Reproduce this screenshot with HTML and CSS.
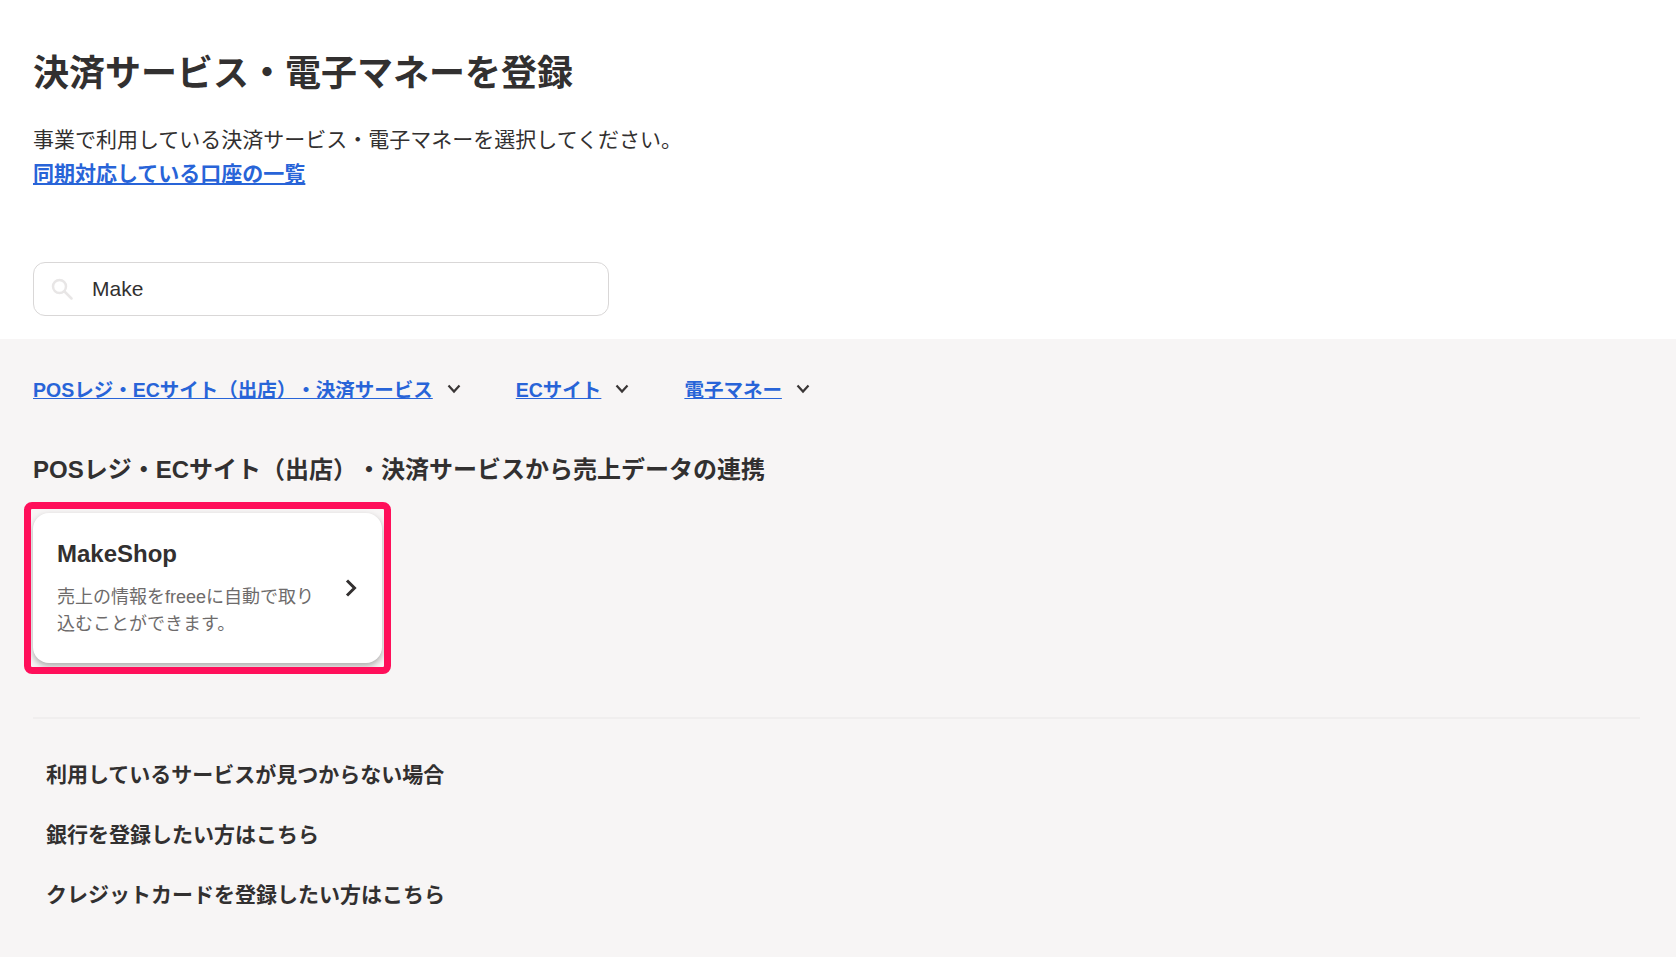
FILE: index.html
```html
<!DOCTYPE html>
<html lang="ja">
<head>
<meta charset="utf-8">
<title>決済サービス・電子マネーを登録</title>
<link rel="stylesheet" href="styles.css">
</head>
<body>
<header class="intro">
  <h1 class="title">決済サービス・電子マネーを登録</h1>
  <p class="lead">事業で利用している決済サービス・電子マネーを選択してください。</p>
  <a class="lead-link" href="#">同期対応している口座の一覧</a>
  <div class="search">
    <svg class="search-icon" width="22" height="22" viewBox="0 0 22 22" fill="none" stroke="#e8e6e6" stroke-width="2.5">
      <circle cx="8.5" cy="8.5" r="6.5"/>
      <path d="M13.5 13.5 L20.5 20.5" stroke-linecap="round"/>
    </svg>
    <span class="search-value">Make</span>
  </div>
</header>
<main class="content">
  <nav class="tabs">
    <div class="tab"><a href="#">POSレジ・ECサイト（出店）・決済サービス</a><svg class="chev" width="14" height="10" viewBox="0 0 14 10" fill="none" stroke="#3a3636" stroke-width="2.2"><path d="M1.5 1.5 L7 7.5 L12.5 1.5"/></svg></div>
    <div class="tab"><a href="#">ECサイト</a><svg class="chev" width="14" height="10" viewBox="0 0 14 10" fill="none" stroke="#3a3636" stroke-width="2.2"><path d="M1.5 1.5 L7 7.5 L12.5 1.5"/></svg></div>
    <div class="tab"><a href="#">電子マネー</a><svg class="chev" width="14" height="10" viewBox="0 0 14 10" fill="none" stroke="#3a3636" stroke-width="2.2"><path d="M1.5 1.5 L7 7.5 L12.5 1.5"/></svg></div>
  </nav>
  <h2 class="section-title">POSレジ・ECサイト（出店）・決済サービスから売上データの連携</h2>
  <a class="card" href="#">
    <div class="card-body">
      <div class="card-name">MakeShop</div>
      <p class="card-desc">売上の情報をfreeeに自動で取り込むことができます。</p>
    </div>
    <svg class="card-arrow" width="12" height="18" viewBox="0 0 12 18" fill="none" stroke="#333030" stroke-width="3"><path d="M2 1.5 L9.5 9 L2 16.5"/></svg>
  </a>
  <hr class="divider">
  <ul class="help">
    <li>利用しているサービスが見つからない場合</li>
    <li>銀行を登録したい方はこちら</li>
    <li>クレジットカードを登録したい方はこちら</li>
  </ul>
</main>
</body>
</html>
```
FILE: styles.css
```css
* { box-sizing: border-box; }
html, body { margin: 0; height: 100%; }
body {
  background: #f7f5f5;
  color: #323030;
  font-family: "Liberation Sans", "Noto Sans CJK JP", sans-serif;
  text-spacing-trim: space-all;
  overflow: hidden;
}
.intro {
  background: #fff;
  height: 339px;
  padding: 50px 33px 0;
}
.title {
  margin: 0;
  font-size: 36px;
  line-height: 48px;
  font-weight: 700;
}
.lead {
  margin: 25px 0 0;
  font-size: 21px;
  line-height: 34px;
  font-weight: 400;
}
.lead-link {
  display: block;
  font-size: 21px;
  line-height: 34px;
  font-weight: 700;
  color: #2864d8;
  text-decoration: underline;
}
.search {
  width: 576px;
  height: 54px;
  margin-top: 71px;
  border: 1px solid #d9d7d7;
  border-radius: 12px;
  display: flex;
  align-items: center;
  padding-left: 17px;
  background: #fff;
}
.search-icon { flex: none; }
.search-value {
  margin-left: 19px;
  font-size: 21px;
  color: #323030;
}
.content { padding: 0 36px 0 33px; }
.tabs {
  display: flex;
  gap: 55px;
  padding-top: 34px;
  height: 111px;
}
.tab {
  display: flex;
  align-items: center;
  gap: 14px;
  height: 30px;
}
.tab a {
  color: #2864d8;
  font-size: 19.5px;
  font-weight: 700;
  text-decoration: underline;
}
.chev { flex: none; margin-top: 2px; }
.section-title {
  margin: 0;
  font-size: 24px;
  line-height: 40px;
  font-weight: 700;
}
.card {
  position: relative;
  display: flex;
  align-items: center;
  width: 349px;
  height: 150px;
  margin-top: 23px;
  padding: 0 25px 0 24px;
  background: #fff;
  border-radius: 16px;
  box-shadow: 0 3px 6px rgba(0, 0, 0, .3);
  color: inherit;
  text-decoration: none;
}
.card::after {
  content: "";
  position: absolute;
  inset: -11px -9px -11px -9px;
  border: 7px solid #ff0f5a;
  border-radius: 8px;
}
.card-body { flex: 1; }
.card-name {
  font-size: 24px;
  line-height: 32px;
  font-weight: 700;
}
.card-desc {
  margin: 14px 0 0;
  font-size: 18px;
  line-height: 27px;
  color: #6e6b6b;
  width: 262px;
}
.card-arrow { flex: none; margin: 0 0 1px 24px; }
.divider {
  margin: 54px 0 0;
  border: 0;
  border-top: 2px solid #f0eeee;
}
.help {
  list-style: none;
  margin: 0;
  padding: 26px 0 0 13px;
  font-size: 21px;
  font-weight: 700;
}
.help li {
  height: 60px;
  line-height: 60px;
}
```
